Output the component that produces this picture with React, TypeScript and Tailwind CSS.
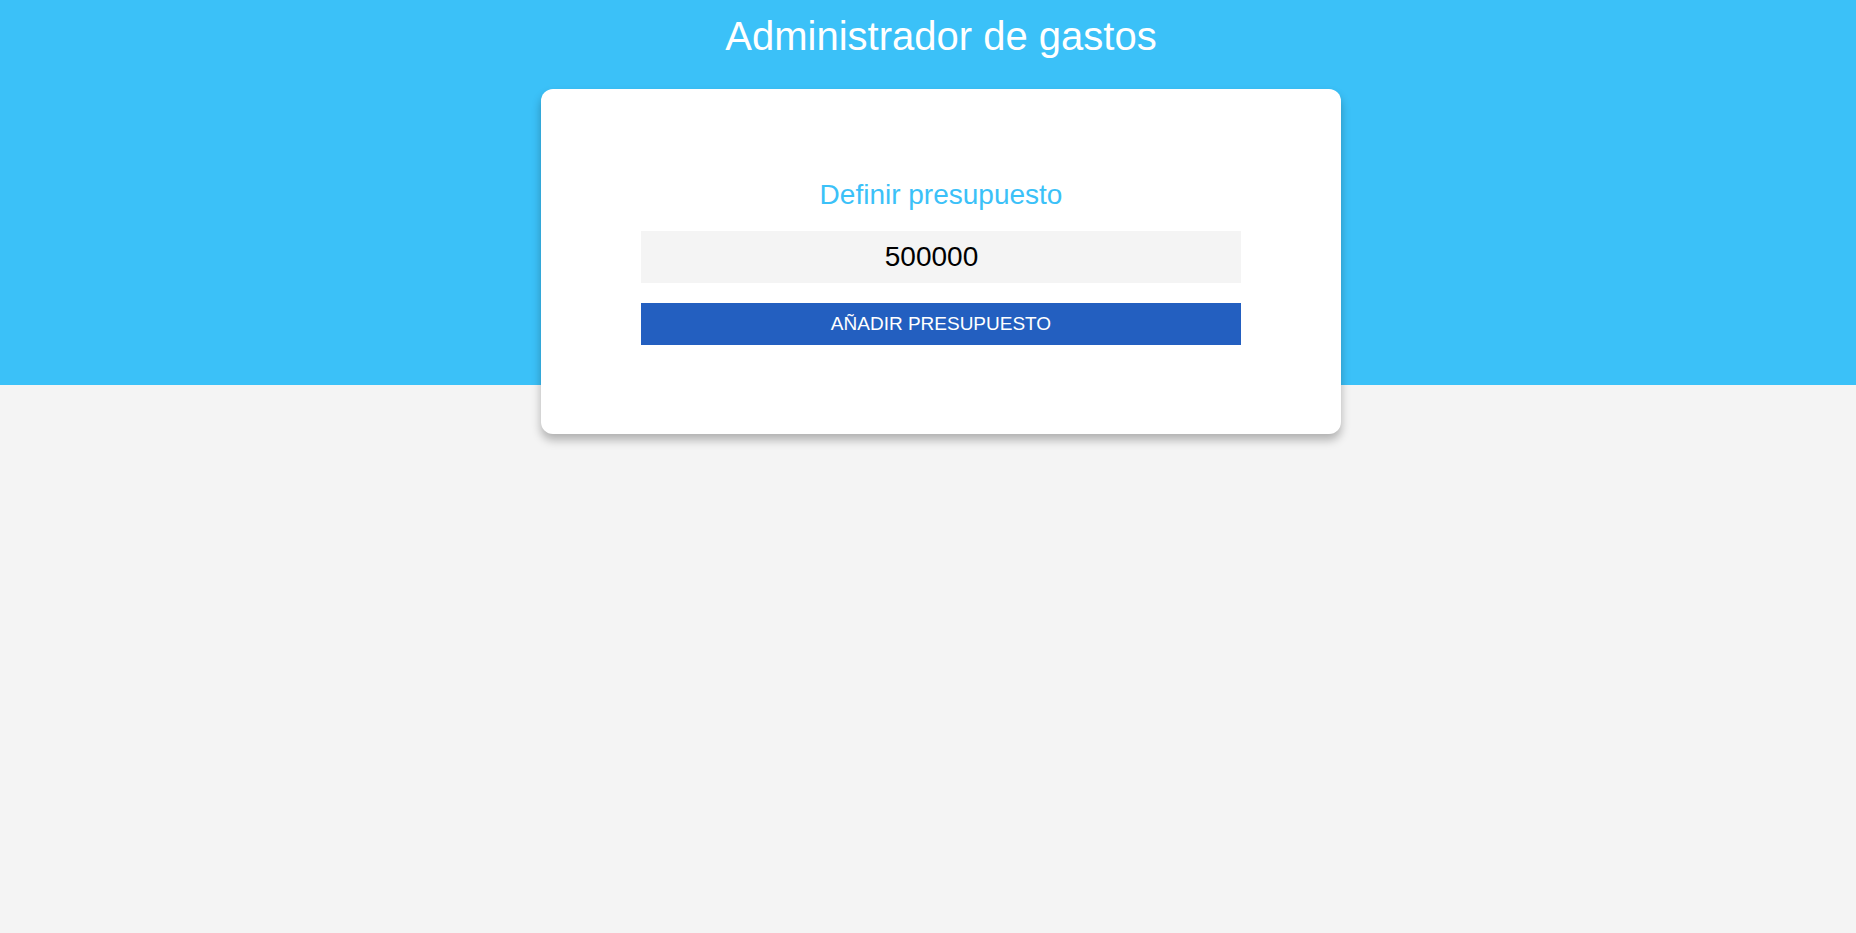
import React from 'react';

const App = () => {
  return (
    <div className="min-h-screen bg-[#f4f4f4] font-['Liberation_Sans',Arial,sans-serif]">
      {/* Header band */}
      <header className="bg-[#3bc1f8] pt-[14px] pb-[326px] pl-[26px]">
        <h1 className="text-center text-[40px] leading-[45px] font-normal text-white">Administrador de gastos</h1>
      </header>

      {/* Budget card */}
      <main className="-mt-[296px] pl-[26px] flex justify-center">
        <div className="w-[800px] bg-white rounded-xl shadow-[0_6px_10px_rgba(0,0,0,0.28)] px-[100px] pt-[90px] pb-[89px]">
          <h2 className="text-center text-[28px] leading-[31px] text-[#3bc1f8]">Definir presupuesto</h2>
          <input
            type="text"
            defaultValue="500000"
            className="mt-[21px] block w-full h-[52px] pr-[19px] bg-[#f4f4f4] text-center text-[28px] text-black outline-none border-0"
          />
          <button className="mt-[20px] block w-full h-[42px] bg-[#235fc0] text-white text-[19px] uppercase">
            Añadir presupuesto
          </button>
        </div>
      </main>
    </div>
  );
};

export default App;
